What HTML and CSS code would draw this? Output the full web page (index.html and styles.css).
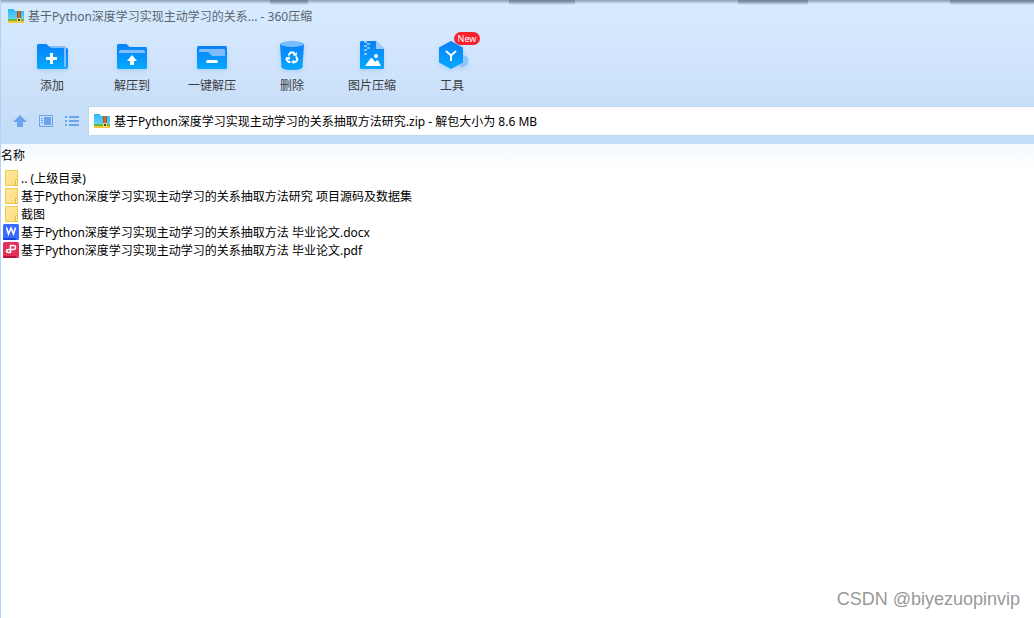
FILE: index.html
```html
<!DOCTYPE html>
<html lang="zh-CN">
<head>
    <meta charset="UTF-8">
    <meta name="viewport" content="width=device-width, initial-scale=1.0">
    <title>360压缩</title>
    <link rel="stylesheet" href="styles.css">
</head>
<body>

<svg width="0" height="0" class="defs" aria-hidden="true">
    <defs>
        <linearGradient id="blue" x1="0" y1="0" x2="0" y2="1">
            <stop offset="0" stop-color="#0a80fa"/>
            <stop offset="1" stop-color="#04a9fd"/>
        </linearGradient>
        <linearGradient id="sky" x1="0" y1="0" x2="0" y2="1">
            <stop offset="0" stop-color="#2eb4fa"/>
            <stop offset="1" stop-color="#62d2fb"/>
        </linearGradient>
        <linearGradient id="paper" x1="0" y1="0" x2="1" y2="1">
            <stop offset="0" stop-color="#ffeaa0"/>
            <stop offset="1" stop-color="#fcdc80"/>
        </linearGradient>
    </defs>
    <symbol id="zip" viewBox="0 0 16 16">
        <path d="M0 1.500Q0 1 .5 1H5.500L7 3H15.500Q16 3 16 3.500V11H0z" fill="url(#sky)"/>
        <path d="M0 11H16V13H0z" fill="#5fbb46"/>
        <path d="M0 13H16V15H0z" fill="#f5c732"/>
        <path d="M9 3H13V12H9z" fill="#a5561a"/>
        <path d="M10.500 3H11.500V10H10.500z" fill="#e0893a"/>
        <path d="M9 10H13V14H9z" fill="#f7d774"/>
        <path d="M10 11H12V13H10z" fill="#5b3a16"/>
    </symbol>
    <symbol id="folder" viewBox="0 0 16 16">
        <path d="M2.500 .5H14.500V15.500H2.500z" fill="url(#paper)" stroke="#efc94f"/>
        <path d="M12.500 15.500V10.500Q12.500 9.500 13.500 9.500H14.500V15.500z" fill="#ffeda8" stroke="#e9bd3d"/>
    </symbol>
</svg>

<div class="window">
    <header class="title-bar">
        <svg class="small-icon"><use href="#zip"/></svg>
        <span>基于Python深度学习实现主动学习的关系... - 360压缩</span>
    </header>

    <nav class="toolbar">
        <button type="button" class="tool">
            <svg class="tool-icon" viewBox="0 0 32 32">
                <path d="M1 5.500Q1 4 2.500 4H10.500L13.500 7H28.500Q30 7 30 8.500V27.500Q30 29 28.500 29H2.500Q1 29 1 27.500z" fill="url(#blue)"/>
                <path d="M13 6H27.500Q30 6 30 8.500V27H28V9Q28 8 27 8H15z" fill="#7fbdfb"/>
                <path d="M30 8Q32 8 32 10V27Q32 29 30 29z" fill="url(#blue)"/>
                <path d="M15.500 13V24M10 18.500H21" stroke="#fff" stroke-width="3"/>
            </svg>
            <span>添加</span>
        </button>
        <button type="button" class="tool">
            <svg class="tool-icon" viewBox="0 0 32 32">
                <path d="M1 5.500Q1 4 2.500 4H10.500L13.500 7H29.500Q31 7 31 8.500V27.500Q31 29 29.500 29H2.500Q1 29 1 27.500z" fill="url(#blue)"/>
                <path d="M3 13V11.500Q3 10 4.500 10H27.500Q29 10 29 11.500V13z" fill="#7fbdfb"/>
                <path d="M16 15L21 21H18V25H14V21H11z" fill="#fff"/>
            </svg>
            <span>解压到</span>
        </button>
        <button type="button" class="tool">
            <svg class="tool-icon" viewBox="0 0 32 32">
                <rect x="1" y="6" width="30" height="23" rx="1.500" fill="url(#blue)"/>
                <path d="M3 10.500Q3 9 4.500 9H27.500Q29 9 29 10.500V16H17Q15.500 16 14.500 14.500L13.500 13Q12.500 12 11 12H3z" fill="#7fbdfb"/>
                <path d="M11.500 21.500H20.500" stroke="#fff" stroke-width="3" stroke-linecap="round"/>
            </svg>
            <span>一键解压</span>
        </button>
        <button type="button" class="tool">
            <svg class="tool-icon" viewBox="0 0 32 32">
                <path d="M4 4H28L26.500 27Q26 30 16 30T5.500 27z" fill="url(#blue)"/>
                <ellipse cx="16" cy="4" rx="12" ry="3" fill="#75bdfc"/>
                <g fill="none" stroke="#fff" stroke-width="2">
                    <path d="M12.500 15.500L14.500 12.500H17.500L19 15"/>
                    <path d="M20 16.500L21.500 19.500L19.500 22H17"/>
                    <path d="M14.500 22H12.500L10.500 19.500L11.500 17.500"/>
                </g>
                <path d="M16.800 15.800H20.800V12zM17.800 19.500V24.200L15.200 22zM9 18L13.500 16.500L14 20z" fill="#fff"/>
            </svg>
            <span>删除</span>
        </button>
        <button type="button" class="tool">
            <svg class="tool-icon" viewBox="0 0 32 32">
                <path d="M4 2.500Q4 1 5.500 1H20L28 9V27.500Q28 29 26.500 29H5.500Q4 29 4 27.500z" fill="url(#blue)"/>
                <path d="M20 1L28 9H20z" fill="#9acbfb"/>
                <path d="M8 1H11V3H8zM11 3H14V5H11zM8 5H11V7H8zM11 7H14V9H11zM8 9H11V11H8zM8 13H11V15H8z" fill="#86c4fc"/>
                <circle cx="20" cy="16" r="2" fill="#fff"/>
                <path d="M9 26L14.500 18.500Q15.500 17.500 16.500 18.500L19 22L20.500 20.500Q21.500 20 22.500 21L25 26z" fill="#fff"/>
            </svg>
            <span>图片压缩</span>
        </button>
        <button type="button" class="tool">
            <svg class="tool-icon" viewBox="0 0 32 32">
                <path d="M26 14L32 17.500V24L26 27.500L20 24V17.500z" fill="#8fc6fa"/>
                <path d="M15 1L27 7.500V22.500L15 29L3 22.500V7.500z" fill="url(#blue)"/>
                <path d="M10 11L15 15.500L20 11M15 15V21" fill="none" stroke="#fff" stroke-width="2"/>
            </svg>
            <span>工具</span>
            <span class="badge">New</span>
        </button>
    </nav>

    <div class="address-row">
        <button type="button" class="nav-btn" aria-label="向上">
            <svg viewBox="0 0 16 16"><path d="M8 2L15 9H11V14H5V9H1z" fill="#6ba3ec"/></svg>
        </button>
        <button type="button" class="nav-btn" aria-label="详情">
            <svg viewBox="0 0 16 16">
                <path d="M1.500 2.500H14.500V13.500H1.500z" fill="none" stroke="#6ba3ec"/>
                <path d="M3 5H5V6H3zM3 7H5V8H3zM3 9H5V10H3zM6 4H13V12H6z" fill="#6ba3ec"/>
            </svg>
        </button>
        <button type="button" class="nav-btn" aria-label="列表">
            <svg viewBox="0 0 16 16">
                <path d="M1 3H3V5H1zM1 7H3V9H1zM1 11H3V13H1zM5 3H15V5H5zM5 7H15V9H5zM5 11H15V13H5z" fill="#6ba3ec"/>
            </svg>
        </button>
        <label class="address">
            <svg class="small-icon"><use href="#zip"/></svg>
            <input type="text" aria-label="路径" value="基于Python深度学习实现主动学习的关系抽取方法研究.zip - 解包大小为 8.6 MB">
        </label>
    </div>

    <main class="file-area">
        <table class="files">
            <thead>
                <tr><th>名称</th></tr>
            </thead>
            <tbody>
                <tr><td><div class="file"><svg class="small-icon"><use href="#folder"/></svg><span>.. (上级目录)</span></div></td></tr>
                <tr><td><div class="file"><svg class="small-icon"><use href="#folder"/></svg><span>基于Python深度学习实现主动学习的关系抽取方法研究 项目源码及数据集</span></div></td></tr>
                <tr><td><div class="file"><svg class="small-icon"><use href="#folder"/></svg><span>截图</span></div></td></tr>
                <tr><td><div class="file">
                    <svg class="small-icon" viewBox="0 0 16 16">
                        <rect width="16" height="16" rx="1.500" fill="#3a6bfa"/>
                        <path d="M0 14H13V16H1Q0 16 0 15z" fill="#1748d8"/>
                        <path d="M3.500 3.500L5.500 10L8 4L10.500 10L12.500 3.500" fill="none" stroke="#fff" stroke-width="1.600"/>
                    </svg>
                    <span>基于Python深度学习实现主动学习的关系抽取方法 毕业论文.docx</span>
                </div></td></tr>
                <tr><td><div class="file">
                    <svg class="small-icon" viewBox="0 0 16 16">
                        <rect width="16" height="16" rx="1.500" fill="#e3315c"/>
                        <path d="M0 14H13V16H1Q0 16 0 15z" fill="#b81440"/>
                        <path d="M7.500 11V3.500H10.500Q12.500 3.500 12.500 5.500T10.500 7.500H5.500Q3.500 7.500 3.500 9T5.500 10.500H7.500" fill="none" stroke="#fff" stroke-width="1.500"/>
                    </svg>
                    <span>基于Python深度学习实现主动学习的关系抽取方法 毕业论文.pdf</span>
                </div></td></tr>
            </tbody>
        </table>
        <p class="watermark">CSDN @biyezuopinvip</p>
    </main>
</div>

</body>
</html>
```

FILE: styles.css
```css
* {
    box-sizing: border-box;
}
body {
    margin: 0;
    font-family: "Noto Sans", "Noto Sans CJK SC", sans-serif;
    font-size: 12px;
    line-height: 18px;
    color: #000;
}
.defs {
    position: absolute;
}
.window {
    min-height: 100vh;
    display: flex;
    flex-direction: column;
    background: linear-gradient(#d6ebff 0, #d3e7fd 36px, #cfe3fc 70px, #c8dff8 104px, #c3def9 144px);
    background-size: 100% 144px;
    background-repeat: no-repeat;
    border-left: 1px solid #b4d2f6;
}
.title-bar {
    display: flex;
    align-items: center;
    gap: 4px;
    height: 32px;
    padding-left: 7px;
    color: #5b646e;
    background:
        linear-gradient(#6f8094, transparent) 27% 0 / 38px 5px no-repeat,
        linear-gradient(#6f8094, transparent) 52.5% 0 / 66px 5px no-repeat,
        linear-gradient(#6f8094, transparent) 76.5% 0 / 70px 5px no-repeat,
        linear-gradient(#6f8094, transparent) 100% 0 / 84px 5px no-repeat,
        linear-gradient(#8ba0b8, transparent) 0 0 / 100% 4px no-repeat;
}
.title-bar span,
.file span,
.address input {
    padding-top: 2px;
}
.small-icon {
    width: 16px;
    height: 16px;
    flex: none;
}
button {
    font: inherit;
    border: none;
    background: none;
    padding: 0;
    cursor: pointer;
}
.toolbar {
    display: flex;
    height: 74px;
    padding: 8px 11px 0;
}
.tool {
    position: relative;
    width: 80px;
    display: flex;
    flex-direction: column;
    align-items: center;
    gap: 5px;
    color: #3c3c3c;
}
.tool-icon {
    width: 32px;
    height: 32px;
    filter: drop-shadow(0 2px 2px rgba(60, 140, 230, 0.2));
}
.badge {
    position: absolute;
    top: -8px;
    left: 42px;
    width: 26px;
    height: 13px;
    border-radius: 7px;
    background: #f8222e;
    color: #fff;
    font-size: 9px;
    line-height: 13px;
    text-align: center;
}
.address-row {
    display: flex;
    align-items: center;
    gap: 10px;
    height: 38px;
    padding: 0 0 8px 11px;
}
.nav-btn {
    width: 16px;
    height: 16px;
}
.nav-btn svg {
    display: block;
}
.address {
    flex: 1;
    display: flex;
    align-items: center;
    gap: 4px;
    height: 30px;
    margin-left: -2px;
    padding-left: 5px;
    background: #fff;
    border: 1px solid #bcd8f4;
    border-right: none;
}
.address input {
    flex: 1;
    border: none;
    outline: none;
    padding: 2px 0 0;
    background: none;
    font: inherit;
    color: inherit;
}
.file-area {
    flex: 1;
    display: flex;
    flex-direction: column;
    justify-content: space-between;
    background: #fff linear-gradient(#f2f8fe, #fff) 0 0 / 100% 24px no-repeat;
}
.files {
    width: 100%;
    border-collapse: collapse;
}
.files th {
    height: 25px;
    padding: 0 0 1px;
    font-weight: normal;
    text-align: left;
}
.files td {
    padding: 0;
}
.file {
    display: flex;
    align-items: center;
    gap: 2px;
    height: 18px;
    padding-left: 2px;
}
.watermark {
    margin: 0;
    padding: 0 14px 7px 0;
    font-family: "Liberation Sans", Arial, sans-serif;
    font-size: 18px;
    line-height: 24px;
    text-align: right;
    color: #999;
}
```
